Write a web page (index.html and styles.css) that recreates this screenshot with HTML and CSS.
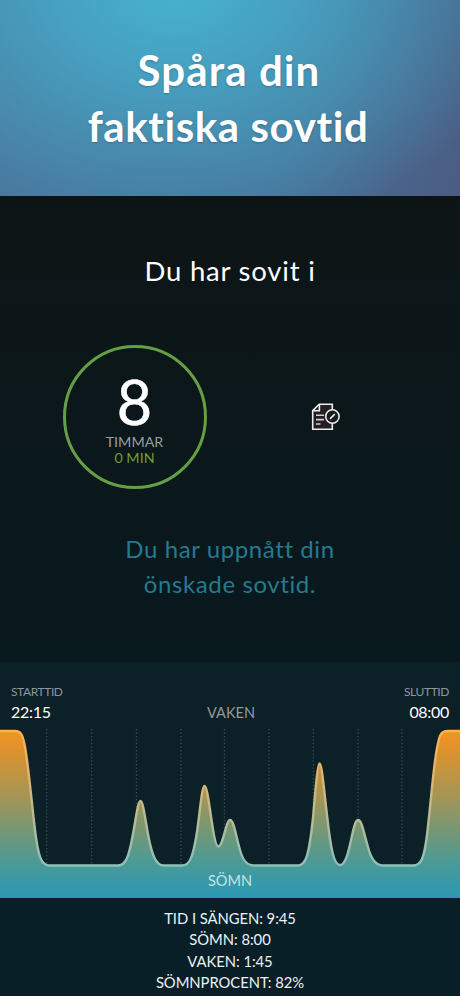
FILE: index.html
```
<!DOCTYPE html>
<html lang="sv">
<head>
<meta charset="utf-8">
<title>Sovtid</title>
<link rel="stylesheet" href="styles.css">
</head>
<body>
<header class="hero"><h1><span class="hero-a">Spåra din</span><br><span class="hero-b">faktiska sovtid</span></h1></header>
<main class="summary">
  <h2>Du har sovit i</h2>
  <div class="result">
    <div class="half"><div class="ring">
      <span class="hours">8</span>
      <span class="unit">TIMMAR</span>
      <span class="minutes">0 MIN</span>
    </div></div>
    <div class="half">
      <svg class="note" viewBox="0 0 30 28" width="30" height="28" fill="none" stroke="#e9eeee" stroke-width="1.6">
        <path d="M8.2 1.2H21.3V26.2H1.7V7.7Z" fill="#231f23"/>
        <path d="M8.4 1.5V7.8H2" />
        <path d="M5 12.3H13M5 16.6H13M5 21H9.5" stroke="#d5cbd0"/>
        <circle cx="21.4" cy="13.5" r="6.7" fill="#1b1a1d"/>
        <path d="M19 15.8L23.8 11.2"/>
      </svg>
    </div>
  </div>
  <p class="message"><span class="msg-a">Du har uppnått din</span><br><span class="msg-b">önskade sovtid.</span></p>
</main>
<section class="sleep">
  <div class="times">
    <div class="time"><span class="label">STARTTID</span><span class="value">22:15</span></div>
    <span class="awake">VAKEN</span>
    <div class="time end"><span class="label">SLUTTID</span><span class="value">08:00</span></div>
  </div>
  <div class="chart">
    <svg viewBox="0 728 460 170" width="460" height="170">
      <defs>
        <linearGradient id="area" gradientUnits="userSpaceOnUse" x1="0" y1="730" x2="0" y2="898">
          <stop offset="0" stop-color="#f39420"/><stop offset=".12" stop-color="#dd922d"/><stop offset=".4" stop-color="#a59556"/><stop offset=".6" stop-color="#759776"/><stop offset=".8" stop-color="#499a98"/><stop offset="1" stop-color="#2a98b5"/>
        </linearGradient>
        <linearGradient id="edge" gradientUnits="userSpaceOnUse" x1="0" y1="730" x2="0" y2="866">
          <stop offset="0" stop-color="#ffaf50"/><stop offset=".5" stop-color="#c8b985"/><stop offset="1" stop-color="#8cc0ba"/>
        </linearGradient>
      </defs>
      <path class="grid" d="M46.7 729V865M91.7 729V865M136.5 729V865M181 729V865M224.5 729V865M269 729V865M313.3 729V865M358 729V865M402 729V865"/>
      <path fill="url(#area)" d="M-4 731H15C21 731 23 735 25 747C29 770 31 797 35 830C38 855 41 865.5 49 865.5H118C126 865.5 129 856 133 834C136 818 138 801 140.5 801C143 801 145 818 148 834C152 856 156 865.5 164 865.5H182C190 865.5 193 857 197 832C200 811 202 786 204.5 786C207 786 209 804 212 823C214 837 216 846.5 218.5 846.5C223 846.5 226 820 230 820C234 820 236 837 240 850C243 861 247 865.5 254 865.5H298C306 865.5 309 855 313 818C315 795 317.5 763.5 319.5 763.5C322 763.5 324 791 327 815C331 851 334 865 340 865C350 865 352 820 358 820C362 820 364 834 368 847C371 859 376 865.5 383 865.5H413C421 865.5 424 859 427 835C431 801 433 773 436 754C439 736 440 731 448 731H464V898H-4Z"/>
      <path fill="none" stroke="url(#edge)" stroke-width="2.4" d="M-4 731H15C21 731 23 735 25 747C29 770 31 797 35 830C38 855 41 865.5 49 865.5H118C126 865.5 129 856 133 834C136 818 138 801 140.5 801C143 801 145 818 148 834C152 856 156 865.5 164 865.5H182C190 865.5 193 857 197 832C200 811 202 786 204.5 786C207 786 209 804 212 823C214 837 216 846.5 218.5 846.5C223 846.5 226 820 230 820C234 820 236 837 240 850C243 861 247 865.5 254 865.5H298C306 865.5 309 855 313 818C315 795 317.5 763.5 319.5 763.5C322 763.5 324 791 327 815C331 851 334 865 340 865C350 865 352 820 358 820C362 820 364 834 368 847C371 859 376 865.5 383 865.5H413C421 865.5 424 859 427 835C431 801 433 773 436 754C439 736 440 731 448 731H464"/>
    </svg>
    <span class="asleep">SÖMN</span>
  </div>
  <div class="stats">
    <div>TID I SÄNGEN: 9:45</div>
    <div>SÖMN: 8:00</div>
    <div>VAKEN: 1:45</div>
    <div>SÖMNPROCENT: 82%</div>
  </div>
</section>
</body>
</html>
```
FILE: styles.css
```
* { box-sizing: border-box; margin: 0; padding: 0; }
body { width: 460px; height: 996px; overflow: hidden; background: #091d25; color: #fff; font-family: Lato, sans-serif; text-align: center; }
.hero {
  height: 196px; padding-top: 43px;
  background:
    radial-gradient(ellipse 350px 270px at 175px -20px, #46b4cf 0%, rgba(70,172,202,.8) 35%, rgba(72,140,175,0) 100%),
    linear-gradient(112deg, #4a759c 0%, #477097 65%, #4b5c83 100%);
}
h1 { font-size: 42px; line-height: 55.5px; font-weight: 700; text-shadow: 0 1px 2px rgba(20,60,90,.35); }
.hero-a { letter-spacing: 1.1px; margin-right: 2px; }
.hero-b { letter-spacing: .6px; margin-right: 4px; }
.summary { height: 466px; padding-top: 55px; background: linear-gradient(#0d1415, #0b171b 50%, #08191d); }
h2 { font-size: 27.5px; line-height: 40px; font-weight: 400; letter-spacing: .8px; }
.result { display: flex; height: 144px; margin-top: 54px; }
.half { width: 189px; margin-left: 40px; display: flex; justify-content: center; align-items: center; }
.half + .half { margin-left: 2px; }
.ring { width: 144px; height: 144px; border: 3px solid #659f43; border-radius: 50%; display: flex; flex-direction: column; align-items: center; padding-top: 24px; }
.hours { font-size: 61px; line-height: 60px; margin-bottom: 2px; -webkit-text-stroke: .5px #fff; }
.unit, .minutes { font-size: 14.3px; line-height: 16px; }
.unit { color: #989d9f; }
.minutes { color: #729d37; }
.note { display: block; }
.message { margin-top: 43px; color: #267990; font-size: 24px; line-height: 34.5px; }
.msg-a, .msg-b { letter-spacing: .6px; }
.sleep { height: 334px; background: #0b2027; }
.times { height: 66px; padding: 20px 11px 0; display: grid; grid-template-columns: 1fr auto 1fr; }
.time { display: flex; flex-direction: column; text-align: left; }
.end { text-align: right; }
.label { font-size: 12px; line-height: 19px; letter-spacing: -.4px; color: #8b979b; }
.value { font-size: 16px; line-height: 21px; letter-spacing: -.3px; }
.awake { font-size: 14.5px; line-height: 20px; padding: 21px 0 0 2px; color: #929b9f; }
.chart { position: relative; height: 170px; }
.chart svg { display: block; }
.grid { stroke: #3a5056; stroke-width: 1.3; stroke-dasharray: 1.3 2.2; }
.asleep { position: absolute; left: 0; right: 0; bottom: 7px; font-size: 14.5px; line-height: 20px; color: #c5e2e6; }
.stats { height: 98px; padding-top: 10px; background: #091f28; font-size: 14.8px; line-height: 21.3px; letter-spacing: -.05px; color: #eaf2f4; }
```
